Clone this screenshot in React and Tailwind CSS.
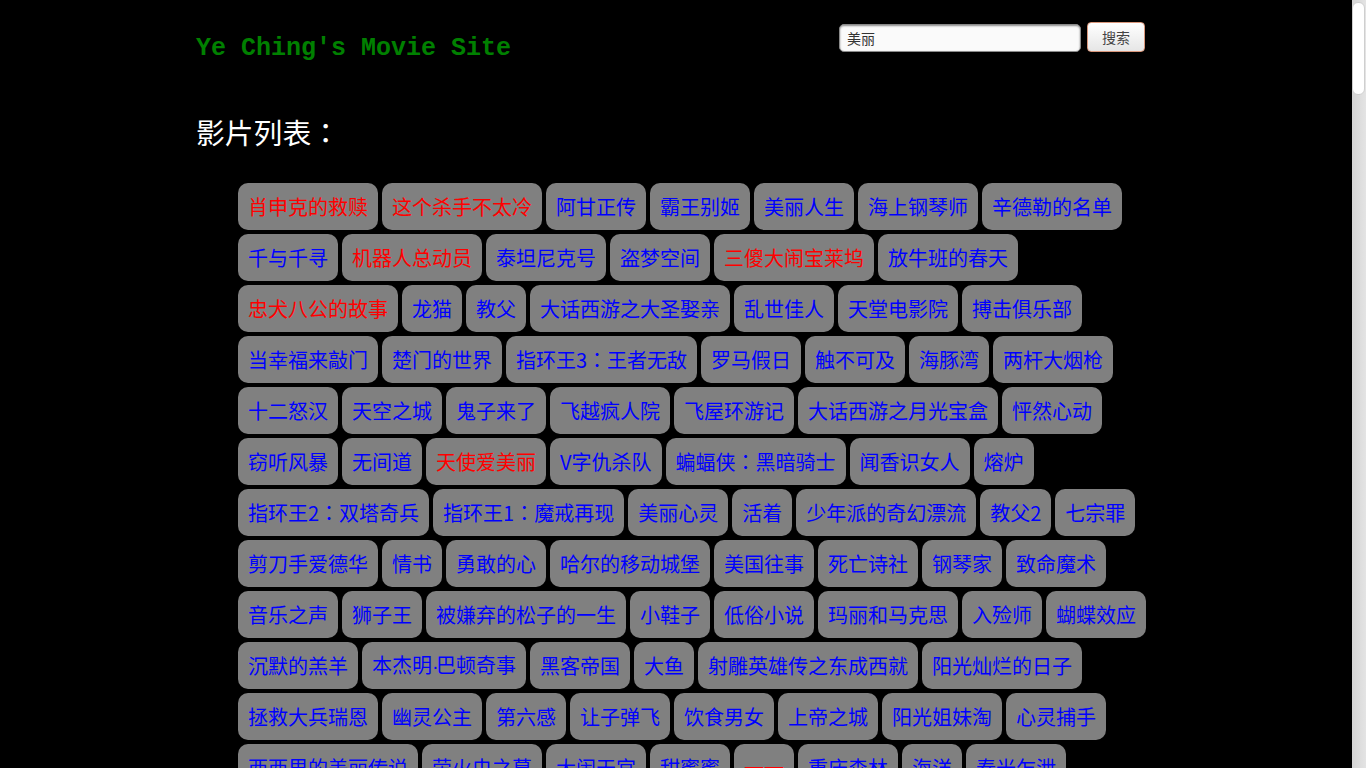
import React from "react";

const movies = [
  ["肖申克的救赎", 1], ["这个杀手不太冷", 1], ["阿甘正传"], ["霸王别姬"], ["美丽人生"], ["海上钢琴师"], ["辛德勒的名单"],
  ["千与千寻"], ["机器人总动员", 1], ["泰坦尼克号"], ["盗梦空间"], ["三傻大闹宝莱坞", 1], ["放牛班的春天"],
  ["忠犬八公的故事", 1], ["龙猫"], ["教父"], ["大话西游之大圣娶亲"], ["乱世佳人"], ["天堂电影院"], ["搏击俱乐部"],
  ["当幸福来敲门"], ["楚门的世界"], ["指环王3：王者无敌"], ["罗马假日"], ["触不可及"], ["海豚湾"], ["两杆大烟枪"],
  ["十二怒汉"], ["天空之城"], ["鬼子来了"], ["飞越疯人院"], ["飞屋环游记"], ["大话西游之月光宝盒"], ["怦然心动"],
  ["窃听风暴"], ["无间道"], ["天使爱美丽", 1], ["V字仇杀队"], ["蝙蝠侠：黑暗骑士"], ["闻香识女人"], ["熔炉"],
  ["指环王2：双塔奇兵"], ["指环王1：魔戒再现"], ["美丽心灵"], ["活着"], ["少年派的奇幻漂流"], ["教父2"], ["七宗罪"],
  ["剪刀手爱德华"], ["情书"], ["勇敢的心"], ["哈尔的移动城堡"], ["美国往事"], ["死亡诗社"], ["钢琴家"], ["致命魔术"],
  ["音乐之声"], ["狮子王"], ["被嫌弃的松子的一生"], ["小鞋子"], ["低俗小说"], ["玛丽和马克思"], ["入殓师"], ["蝴蝶效应"],
  ["沉默的羔羊"], ["本杰明·巴顿奇事"], ["黑客帝国"], ["大鱼"], ["射雕英雄传之东成西就"], ["阳光灿烂的日子"],
  ["拯救大兵瑞恩"], ["幽灵公主"], ["第六感"], ["让子弹飞"], ["饮食男女"], ["上帝之城"], ["阳光姐妹淘"], ["心灵捕手"],
  ["西西里的美丽传说"], ["萤火虫之墓"], ["大闹天宫"], ["甜蜜蜜"], ["一一", 1], ["重庆森林"], ["海洋"], ["春光乍泄"],
  ["天空之城"], ["布达佩斯大饭店"], ["禁闭岛"], ["致命ID"], ["无耻混蛋"], ["辩护人"], ["恐怖直播"],
];

function Name({ text }) {
  const parts = [];
  let buf = "";
  [...text].forEach((ch, i) => {
    if (ch === "：") {
      if (buf) parts.push(buf);
      buf = "";
      parts.push(
        <span key={i} style={{ fontFamily: "'Noto Sans CJK TC', sans-serif" }}>
          ：
        </span>
      );
    } else if (ch === "·") {
      if (buf) parts.push(buf);
      buf = "";
      parts.push(
        <span key={i} className="inline-block w-[4px] text-center" style={{ fontFamily: "'Liberation Sans', sans-serif" }}>
          ·
        </span>
      );
    } else {
      buf += ch;
    }
  });
  if (buf) parts.push(buf);
  return <>{parts}</>;
}

export default function App() {
  return (
    <div className="flex h-screen w-full overflow-hidden bg-black">
      <div className="flex-1 overflow-hidden">
        <div className="mx-auto w-[960px]">
          <div className="flex items-start justify-between pt-[22px] pr-[11px]">
            <h1
              className="mt-[11px] text-[25px] font-bold leading-[32px] text-[#008000]"
              style={{ fontFamily: "'Courier New', 'Nimbus Mono PS', 'FreeMono', 'Liberation Mono', monospace" }}
            >
              Ye Ching's Movie Site
            </h1>
            <div className="flex items-start gap-[6px]" style={{ fontFamily: "'Noto Sans CJK SC', sans-serif" }}>
              <div className="mt-[2px] flex h-[28px] w-[242px] items-center rounded-[5px] border border-[#8a8a8a] bg-[#fafafa] px-[7px] text-[14px] text-[#333] shadow-[inset_0_1px_2px_rgba(0,0,0,0.45)]">
                美丽
              </div>
              <button className="flex h-[30px] w-[58px] items-center justify-center rounded-[4px] border border-[#d9967a] bg-gradient-to-b from-white to-[#e6e6e6] text-[14px] text-[#444]">
                搜索
              </button>
            </div>
          </div>
          <h2
            className="mt-[47px] text-[28.8px] leading-[40px] text-white"
            style={{ fontFamily: "'Noto Sans CJK SC', sans-serif" }}
          >
            影片列表<span style={{ fontFamily: "'Noto Sans CJK TC', sans-serif" }}>：</span>
          </h2>
          <ul
            className="mt-[31px] flex flex-wrap gap-x-[4px] gap-y-[4px] pl-[42px] pr-[2px]"
            style={{ fontFamily: "'Noto Sans CJK SC', sans-serif" }}
          >
            {movies.map(([name, red], i) => (
              <li
                key={i}
                className={
                  "flex h-[47px] items-center rounded-[10px] bg-[#808080] px-[10px] text-[20px] leading-normal " +
                  (red ? "text-[#ff0000]" : "text-[#0000ff]")
                }
              >
                <span>
                  <Name text={name} />
                </span>
              </li>
            ))}
          </ul>
        </div>
      </div>
      <div className="relative w-[14px] shrink-0 bg-gradient-to-r from-[#d4d4d4] to-[#e4e4e4]">
        <div className="absolute left-0 right-[1px] top-[2px] h-[93px] rounded-[6px] border border-[#cfcfcf] bg-white" />
      </div>
    </div>
  );
}
